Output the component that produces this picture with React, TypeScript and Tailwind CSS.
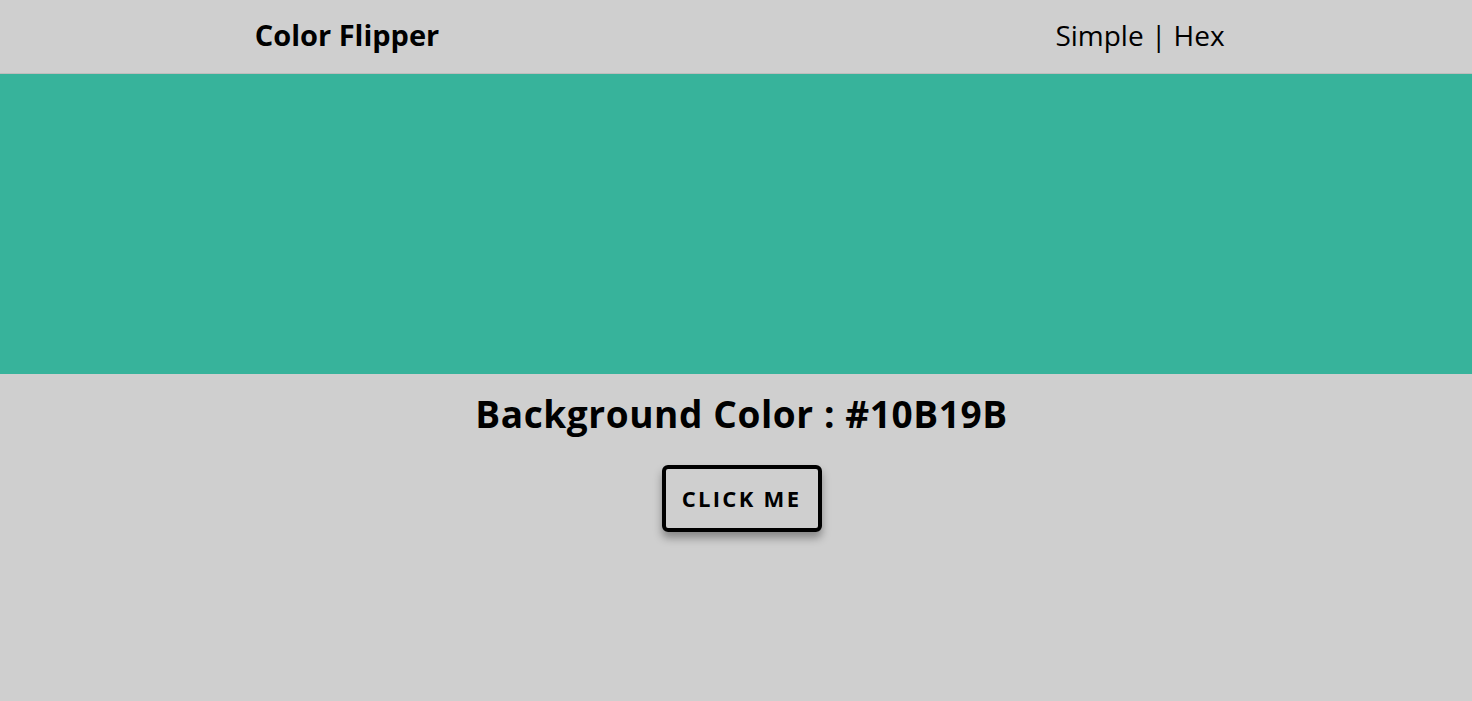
export default function App() {
  return (
    <div className="min-h-[701px] bg-[#cfcfcf] text-black font-['Open_Sans',sans-serif]">
      <header className="flex h-[74px] items-center border-b border-[#bdbdbd] pb-[4px] pl-[197px] pr-[182px]">
        <div className="w-[300px] text-center text-[29px] font-bold">Color Flipper</div>
        <div className="ml-auto w-[300px] text-center text-[28px]">Simple | Hex</div>
      </header>
      <div className="h-[300px] bg-[#37b39b]"></div>
      <main className="flex flex-col items-center pl-[11px] pt-[12px]">
        <h2 className="text-[37px] font-bold tracking-[0.6px]">Background Color : #10B19B</h2>
        <button className="mt-[23px] h-[67px] w-[160px] rounded-md border-4 border-black text-[22px] font-bold tracking-[2.3px] shadow-[0_6px_8px_rgba(0,0,0,0.35)]">
          CLICK ME
        </button>
      </main>
    </div>
  );
}
